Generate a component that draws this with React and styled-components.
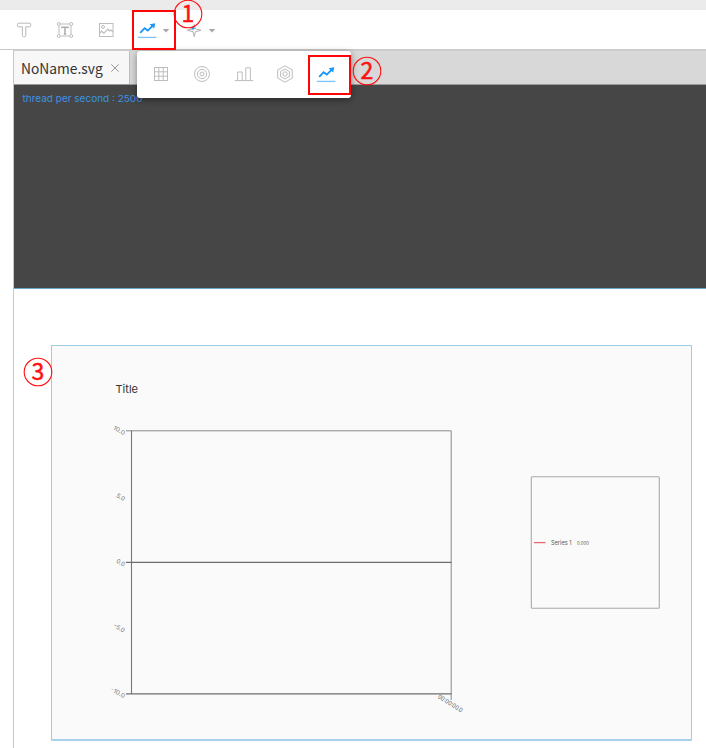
import React from "react";
import styled, { createGlobalStyle } from "styled-components";

const Global = createGlobalStyle`
  * { box-sizing: border-box; }
  body { margin: 0; background: #fff; overflow: hidden; font-family: "Noto Sans CJK KR", "Noto Sans", sans-serif; }
  svg { display: block; flex: none; overflow: visible; }
`;

const Window = styled.div`
  position: relative;
  width: 706px;
  height: 748px;
  display: flex;
  flex-direction: column;
  overflow: hidden;
  background: #fff;
`;
const TitleStrip = styled.div`
  height: 10px;
  flex: none;
  background: #ebebeb;
`;
const Toolbar = styled.div`
  height: 40px;
  flex: none;
  display: flex;
  align-items: center;
  padding-left: 3.5px;
  border-bottom: 1px solid #c9c9c9;
`;
const Tool = styled.div`
  width: ${(p) => p.$w || 41}px;
  margin-left: ${(p) => p.$gap || 0}px;
  height: 39px;
  display: flex;
  align-items: center;
  justify-content: center;
  padding-top: ${(p) => p.$drop || 1}px;
`;
const Workspace = styled.div`
  flex: 1;
  display: flex;
  flex-direction: column;
  margin-left: 13px;
  border-left: 1px solid #b0cfe0;
  min-height: 0;
`;
const TabBar = styled.div`
  height: 35px;
  flex: none;
  background: #d8d8d8;
  border-top: 1px solid #cecece;
  border-bottom: 1px solid #999;
  display: flex;
`;
const Tab = styled.div`
  width: 116px;
  display: flex;
  align-items: center;
  gap: 9px;
  padding: 1px 0 0 7px;
  background: #f7f7f7;
  border-right: 1px solid #bdbdbd;
`;
const TabName = styled.span`
  width: 81px;
  font-size: 13.8px;
  line-height: 20px;
  color: #333;
  white-space: nowrap;
`;
const DarkArea = styled.div`
  height: 203px;
  flex: none;
  background: #464646;
  padding: 6px 0 0 8px;
`;
const Canvas = styled.div`
  flex: 1;
  border-top: 1px solid #69a5c8;
  padding: 56px 0 0 37px;
  background: #fff;
`;
const ChartPanel = styled.div`
  width: 641px;
  height: 396px;
  background: #fafafa;
  border: 1px solid #9fcbe6;
  border-bottom: 2px solid #a9d2ea;
  border-radius: 1px;
`;
const Menu = styled.div`
  position: absolute;
  left: 137px;
  top: 51px;
  width: 214px;
  height: 47px;
  display: flex;
  align-items: center;
  padding: 0 0 1px 3.5px;
  background: #fff;
  border-radius: 3px;
  box-shadow: 0 2px 7px rgba(0, 0, 0, 0.42);
`;
const MenuItem = styled.div`
  width: 41.25px;
  display: flex;
  justify-content: center;
`;
const Highlight = styled.div`
  position: absolute;
  left: ${(p) => p.$x}px;
  top: ${(p) => p.$y}px;
  width: ${(p) => p.$w}px;
  height: 40px;
  border: 2px solid #ff0505;
`;
const Callout = styled.div`
  position: absolute;
  left: ${(p) => p.$x}px;
  top: ${(p) => p.$y}px;
`;

const Svg = ({ w = 24, h = 24, children }) => (
  <svg width={w} height={h} viewBox={`0 0 ${w} ${h}`} fill="none" stroke="#bdbdbd" strokeWidth="1">
    {children}
  </svg>
);

const TextIcon = () => (
  <Svg>
    <path d="M6.5 5.2h11.2q1 0 1 1v1.6q0 1-1 1h-3.9V17.5q0 1.2-1 1.2h-1.4q-1 0-1-1.2V8.8H6.5q-1 0-1-1V6.2q0-1 1-1z" stroke="#b8b8b8" />
  </Svg>
);
const TextBoxIcon = () => (
  <Svg>
    <path d="M7 6h10M7 18h10M6 7.5v9M18 7.5v9" />
    <circle cx="5.8" cy="6" r="1.5" fill="#fff" />
    <circle cx="18.2" cy="6" r="1.5" fill="#fff" />
    <circle cx="5.8" cy="18" r="1.5" fill="#fff" />
    <circle cx="18.2" cy="18" r="1.5" fill="#fff" />
    <path d="M9 10.2V9.2h6v1M12 9.2v6.8M10.8 15.9h2.4" strokeWidth="1.5" stroke="#acacac" />
  </Svg>
);
const ImageIcon = () => (
  <Svg>
    <rect x="5.5" y="5.5" width="13.5" height="13" />
    <circle cx="9" cy="9" r="1.5" />
    <path d="M5.5 15.5l2.2-2.3 2.2 2 4-4 1.6 1.8 1.3-1 2.2 1.8" strokeWidth="1.2" />
  </Svg>
);
const TrendIcon = () => (
  <Svg>
    <path d="M5.2 14.8L9.6 10.2L12.8 12.6L18 7.4" stroke="#1a97fb" strokeWidth="1.9" />
    <path d="M14.6 6.2L20.2 5.2L19.2 10.6z" fill="#1a97fb" stroke="none" />
    <path d="M2.8 19.4H21.4" stroke="#7cc3fa" strokeWidth="1.3" />
  </Svg>
);
const SparkIcon = () => (
  <Svg>
    <path d="M12.2 6.5l1.2 4.4L19 12.3l-5.6 1.4L12.2 18.6l-1.2-4.9L5.4 12.3l5.6-1.4z" stroke="#b0b0b0" />
    <circle cx="11" cy="10" r="1.6" fill="#1a97fb" stroke="none" />
  </Svg>
);
const Caret = () => (
  <Svg w={8} h={6}>
    <path d="M.8 1h6.4L4 4.6z" fill="#a6a6a6" stroke="none" />
  </Svg>
);
const GridIcon = () => (
  <Svg>
    <path d="M5 5.5h14M5 9.8h14M5 14.2h14M5 18.5h14M5.5 5v14M9.8 5v14M14.2 5v14M18.5 5v14" />
  </Svg>
);
const TargetIcon = () => (
  <Svg>
    <circle cx="12" cy="12" r="7.5" />
    <circle cx="12" cy="12" r="4.6" />
    <circle cx="12" cy="12" r="2" />
  </Svg>
);
const BarsIcon = () => (
  <Svg>
    <path d="M2.8 18.6h18.4M5.6 18.6V10h4.6v8.6M13.8 18.6V5.8h4.6v12.8" />
  </Svg>
);
const HexIcon = () => (
  <Svg>
    <path d="M12 3.8l7.3 4.1v8.2L12 20.2l-7.3-4.1V7.9z" />
    <path d="M12 7l4.4 2.5v5L12 17l-4.4-2.5v-5z" />
    <circle cx="12" cy="12" r="2.2" />
  </Svg>
);

const Num = ({ x, y, n }) => (
  <Callout $x={x} $y={y}>
    <svg width="30" height="30" viewBox="0 0 30 30">
      <circle cx="15" cy="15" r="13.8" fill="none" stroke="#ff1010" strokeWidth="1.1" />
      <text x="15" y="23" textAnchor="middle" fontSize="23" fill="#ff1010" stroke="#ff1010" strokeWidth=".5" fontFamily='"Noto Sans CJK KR", sans-serif'>
        {n}
      </text>
    </svg>
  </Callout>
);

const yTicks = [
  { label: "10.0", y: 430.5, w: 12.5 },
  { label: "5.0", y: 496.5, w: 9 },
  { label: "0.0", y: 562, w: 9 },
  { label: "-5.0", y: 628, w: 12 },
  { label: "-10.0", y: 693.5, w: 15.5 },
];

const Chart = () => (
  <svg width="639" height="393" viewBox="52 346 639 393" fontFamily='Inter, "Noto Sans", sans-serif'>
    <text x="115.5" y="393.2" fontSize="11" fill="#333" textLength="22.5" lengthAdjust="spacingAndGlyphs">Title</text>
    <g stroke="#8a8a8a" strokeWidth="1" fill="none">
      <path d="M126 430.8H451.2V700" />
      <path d="M131.5 430.5V694" stroke="#777" strokeWidth="1.1" />
      <path d="M126 562.3H451.5" stroke="#6c6c6c" strokeWidth="1.2" />
      <path d="M126 693.8H451.5" stroke="#6c6c6c" strokeWidth="1.2" />
    </g>
    {yTicks.map((t) => (
      <text key={t.label} transform={`translate(123.5 ${t.y + 4.7}) rotate(30)`} textAnchor="end" fontSize="6" fill="#777" textLength={t.w} lengthAdjust="spacingAndGlyphs">
        {t.label}
      </text>
    ))}
    <text transform="translate(437.5 697.8) rotate(32)" fontSize="6" fill="#666" textLength="28" lengthAdjust="spacingAndGlyphs">00:00:00.0</text>
    <rect x="531.3" y="476.8" width="128" height="131.4" rx="1" fill="none" stroke="#a8a8a8" strokeWidth="1.1" />
    <path d="M534 542.6h11.5" stroke="#e8696c" strokeWidth="1.3" />
    <text x="551" y="545" fontSize="5.8" fill="#555" textLength="20.5" lengthAdjust="spacingAndGlyphs">Series 1</text>
    <text x="577" y="544.8" fontSize="4.6" fill="#555" textLength="12" lengthAdjust="spacingAndGlyphs">0.000</text>
  </svg>
);

const menuIcons = [GridIcon, TargetIcon, BarsIcon, HexIcon, TrendIcon];

export default function App() {
  return (
    <Window>
      <Global />
      <TitleStrip />
      <Toolbar>
        <Tool><TextIcon /></Tool>
        <Tool><TextBoxIcon /></Tool>
        <Tool><ImageIcon /></Tool>
        <Tool $w={29} $gap={6}><TrendIcon /></Tool>
        <Tool $w={9} $drop={3}><Caret /></Tool>
        <Tool $w={28} $gap={9}><SparkIcon /></Tool>
        <Tool $w={9} $drop={3}><Caret /></Tool>
      </Toolbar>
      <Workspace>
        <TabBar>
          <Tab>
            <TabName>NoName.svg</TabName>
            <Svg w={8} h={8}><path d="M.3.3l7.4 7.4M7.7.3L.3 7.7" stroke="#999" /></Svg>
          </Tab>
        </TabBar>
        <DarkArea>
          <svg width="130" height="16" viewBox="0 0 130 16">
            <text x="0.5" y="11" fontSize="9.6" fill="#3b93e4" fontFamily='Inter, "Noto Sans", sans-serif' textLength="120" lengthAdjust="spacingAndGlyphs">thread per second : 2500</text>
          </svg>
        </DarkArea>
        <Canvas>
          <ChartPanel><Chart /></ChartPanel>
        </Canvas>
      </Workspace>
      <Menu>
        {menuIcons.map((Icon, i) => (
          <MenuItem key={i}><Icon /></MenuItem>
        ))}
      </Menu>
      <Highlight $x={132} $y={10} $w={44} />
      <Highlight $x={308} $y={55} $w={43} />
      <Num x={173} y={-1.2} n="1" />
      <Num x={352} y={56.3} n="2" />
      <Num x={23.3} y={356.7} n="3" />
    </Window>
  );
}
